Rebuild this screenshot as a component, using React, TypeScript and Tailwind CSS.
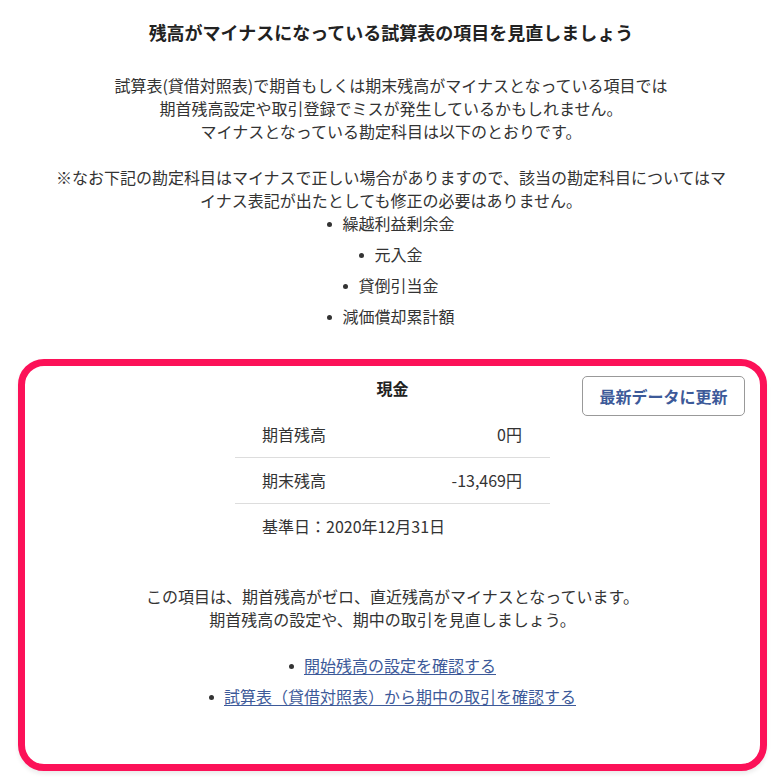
const exemptAccounts = ["繰越利益剰余金", "元入金", "貸倒引当金", "減価償却累計額"];

const balances = [
  { label: "期首残高", value: "0円" },
  { label: "期末残高", value: "-13,469円" },
];

const links = ["開始残高の設定を確認する", "試算表（貸借対照表）から期中の取引を確認する"];

function Bullet() {
  return <span className="inline-block w-[5px] h-[5px] rounded-full bg-[#333] align-middle mr-[10px] mb-[2px]" />;
}

export default function App() {
  return (
    <div
      className="min-h-screen bg-white text-[#333] text-[16px] leading-[23px] pt-[20px] pb-[6px]"
      style={{ fontFamily: '"Noto Sans CJK JP", "Noto Sans", sans-serif' }}>
      {/* Header */}
      <h1 className="text-center text-[18px] leading-[24px] font-bold text-[#222]">
        残高がマイナスになっている試算表の項目を見直しましょう
      </h1>

      <p className="mt-[30px] text-center">
        試算表(貸借対照表)で期首もしくは期末残高がマイナスとなっている項目では
        <br />
        期首残高設定や取引登録でミスが発生しているかもしれません。
        <br />
        マイナスとなっている勘定科目は以下のとおりです。
        <br />
        <br />
        ※なお下記の勘定科目はマイナスで正しい場合がありますので、該当の勘定科目についてはマ
        <br />
        イナス表記が出たとしても修正の必要はありません。
      </p>

      <ul className="text-center">
        {exemptAccounts.map((a) => (
          <li key={a} className="mb-[8px] last:mb-0">
            <Bullet />
            {a}
          </li>
        ))}
      </ul>

      {/* Account card */}
      <div className="relative mt-[31px] ml-[18px] mr-[15px] rounded-[26px] border-[7px] border-[#fc1158] bg-white pt-[11px] pb-[56px] shadow-[0_3px_4px_rgba(0,0,0,0.08)]">
        <button className="absolute top-[10px] right-[15px] h-[40px] w-[163px] rounded-[5px] border border-[#999] bg-white text-[16px] font-bold text-[#3d5a99]">
          最新データに更新
        </button>

        <h2 className="text-center font-bold text-[#222]">現金</h2>

        <div className="mx-auto mt-[12px] w-[315px]">
          {balances.map((b) => (
            <div
              key={b.label}
              className="flex justify-between border-b border-[#ddd] pl-[27px] pr-[28px] py-[11px]">
              <span>{b.label}</span>
              <span>{b.value}</span>
            </div>
          ))}
          <div className="pl-[27px] py-[11px]">基準日：2020年12月31日</div>
        </div>

        <p className="mt-[36px] text-center">
          この項目は、期首残高がゼロ、直近残高がマイナスとなっています。
          <br />
          期首残高の設定や、期中の取引を見直しましょう。
        </p>

        <ul className="mt-[23px] text-center">
          {links.map((l) => (
            <li key={l} className="mb-[8px] last:mb-0">
              <Bullet />
              <a href="#" className="text-[#3d5a99] underline underline-offset-2">
                {l}
              </a>
            </li>
          ))}
        </ul>
      </div>
    </div>
  );
}
